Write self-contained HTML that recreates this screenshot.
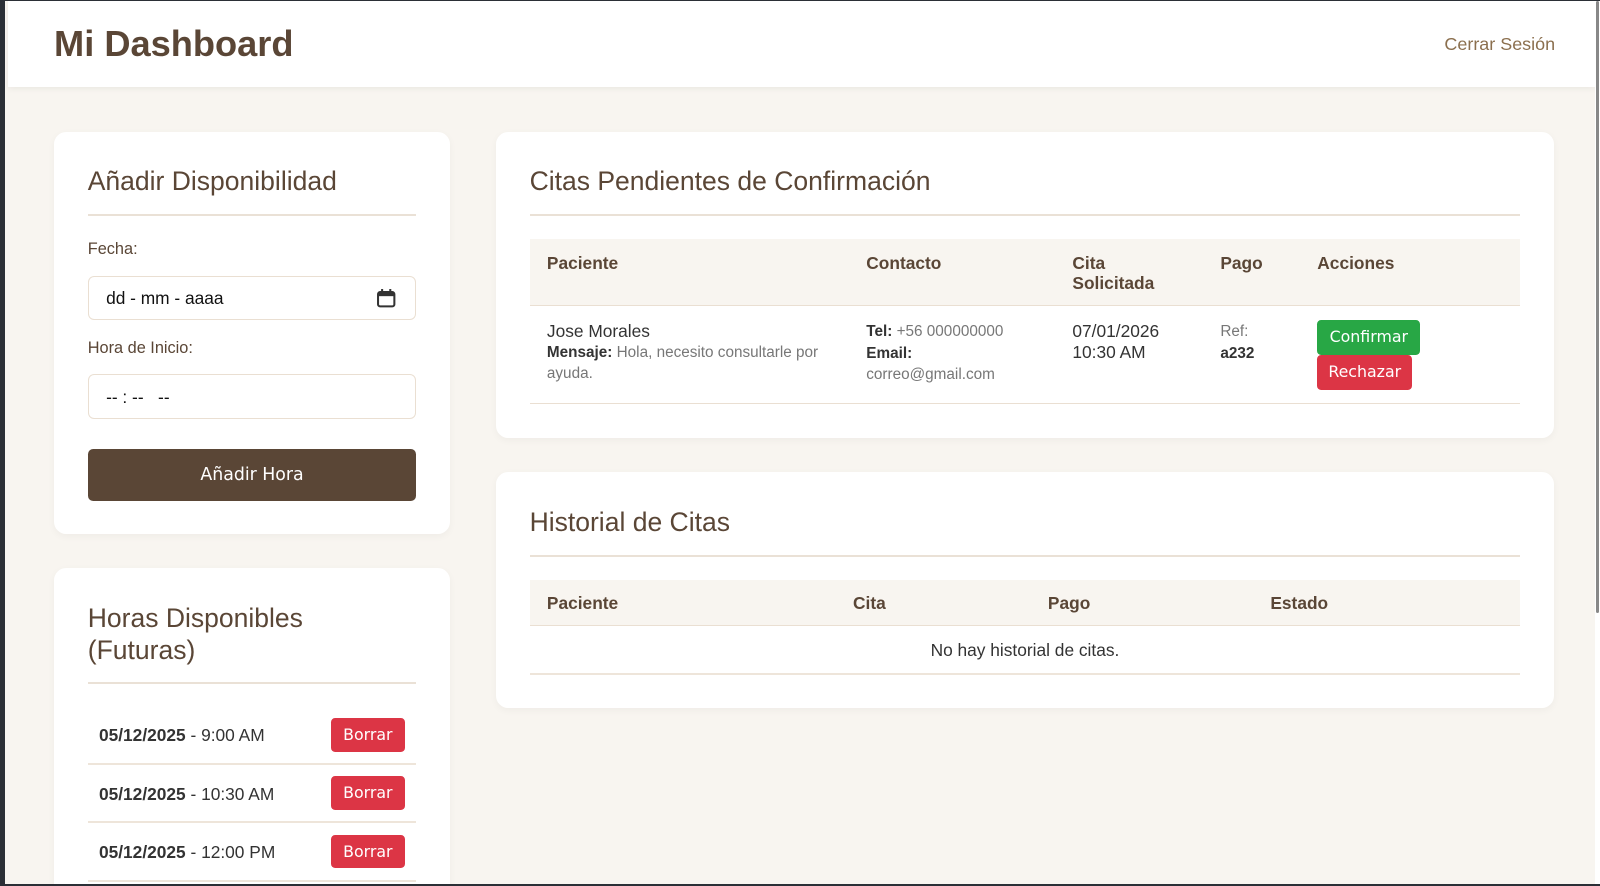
<!DOCTYPE html>
<html><head><meta charset="utf-8">
<style>
html,body{margin:0;padding:0;width:1600px;height:886px;overflow:hidden;background:#2b2f36;}
#w{zoom:1.0204;position:relative;width:1568px;height:868px;font-family:"Liberation Sans",sans-serif;}
#page{position:absolute;left:5px;top:1px;width:1558px;height:865px;background:#f8f5f0;overflow:hidden;}
#sb{position:absolute;left:1563px;top:1px;width:5px;height:865px;background:#fff;}
#sb div{position:absolute;left:1px;top:0;width:3px;height:600px;background:#888;border-radius:2px;}
.hdr{position:absolute;left:3px;top:0;width:1555px;height:84px;background:#fff;box-shadow:0 2px 6px rgba(0,0,0,.06);}
.hdr h1{position:absolute;left:45px;top:22px;margin:0;font-size:35.5px;font-weight:bold;color:#5a4636;}
.hdr a{position:absolute;right:39px;top:32px;font-size:17.6px;color:#8b6f4e;}
.card{position:absolute;background:#fff;border-radius:12px;box-shadow:0 2px 8px rgba(0,0,0,.04);}
.card h2{position:absolute;left:33px;margin:0;font-weight:normal;font-size:26px;color:#5a4636;line-height:31px;}
.hr{position:absolute;left:33px;right:33px;height:2px;background:#eae1d6;}
.lbl{position:absolute;left:33px;font-size:16px;color:#5a4636;}
.inp{position:absolute;left:33px;width:320px;height:42px;border:1px solid #eadfd2;border-radius:6px;font-size:17px;color:#111;}
.inp span{position:absolute;left:17px;top:11px;}
.btnm{position:absolute;left:33px;width:322px;height:51px;background:#5a4636;border-radius:5px;color:#fff;text-align:center;line-height:51px;font-family:"DejaVu Sans","Liberation Sans",sans-serif;font-size:17px;}
.th{position:absolute;left:33px;right:33px;background:#f8f5f0;border-bottom:1px solid #eadfd2;}
.th b{position:absolute;font-size:17px;color:#5a4636;}
.btn{position:absolute;color:#fff;border-radius:4px;font-family:"DejaVu Sans","Liberation Sans",sans-serif;font-size:15.5px;text-align:center;}
.red{background:#dc3545}.grn{background:#28a745}
.row{position:absolute;left:33px;right:33px;height:57px;border-bottom:2px solid #eee5da;}
.row .t{position:absolute;left:11px;top:20px;font-size:17px;color:#333;}
.row .btn{right:11px;top:13px;width:73px;height:33px;line-height:33px}
</style></head><body><div id="w">
<div id="page">
 <div class="hdr"><h1>Mi Dashboard</h1><a>Cerrar Sesión</a></div>

 <div class="card" style="left:48px;top:128px;width:388px;height:394px;">
  <h2 style="top:34px">Añadir Disponibilidad</h2>
  <div class="hr" style="top:81px"></div>
  <div class="lbl" style="top:106px">Fecha:</div>
  <div class="inp" style="top:141px"><span>dd - mm - aaaa</span>
   <svg style="position:absolute;right:18px;top:11px" width="20" height="20" viewBox="0 0 20 20"><rect x="2" y="4" width="16" height="14" rx="2" fill="none" stroke="#333" stroke-width="2"/><rect x="2" y="4" width="16" height="4" fill="#333"/><rect x="5" y="1" width="2" height="4" fill="#333"/><rect x="13" y="1" width="2" height="4" fill="#333"/></svg></div>
  <div class="lbl" style="top:203px">Hora de Inicio:</div>
  <div class="inp" style="top:238px"><span>-- : --&nbsp;&nbsp; --</span></div>
  <div class="btnm" style="top:311px">Añadir Hora</div>
 </div>

 <div class="card" style="left:48px;top:556px;width:388px;height:340px;">
  <h2 style="top:34px">Horas Disponibles<br>(Futuras)</h2>
  <div class="hr" style="top:111px"></div>
  <div class="row" style="top:134px"><div class="t"><b>05/12/2025</b> - 9:00 AM</div><div class="btn red">Borrar</div></div>
  <div class="row" style="top:191px"><div class="t"><b>05/12/2025</b> - 10:30 AM</div><div class="btn red">Borrar</div></div>
  <div class="row" style="top:248px"><div class="t"><b>05/12/2025</b> - 12:00 PM</div><div class="btn red">Borrar</div></div>
 </div>

 <div class="card" style="left:481px;top:128px;width:1037px;height:300px;">
  <h2 style="top:34px">Citas Pendientes de Confirmación</h2>
  <div class="hr" style="top:81px"></div>
  <div class="th" style="top:105px;height:65px;">
   <b style="left:17px;top:14px">Paciente</b><b style="left:330px;top:14px">Contacto</b>
   <b style="left:532px;top:14px;line-height:20px">Cita<br>Solicitada</b><b style="left:677px;top:14px">Pago</b><b style="left:772px;top:14px">Acciones</b>
  </div>
  <div style="position:absolute;left:33px;right:33px;top:171px;height:95px;border-bottom:1px solid #eadfd2;">
   <div style="position:absolute;left:17px;top:15px;font-size:17px;color:#333">Jose Morales</div>
   <div style="position:absolute;left:17px;top:35px;width:290px;font-size:15px;line-height:21px;color:#777"><b style="color:#333">Mensaje:</b> Hola, necesito consultarle por ayuda.</div>
   <div style="position:absolute;left:330px;top:15px;font-size:15px;line-height:21px;color:#777"><b style="color:#333">Tel:</b> +56 000000000<br><b style="color:#333">Email:</b><br>correo@gmail.com</div>
   <div style="position:absolute;left:532px;top:15px;font-size:17px;line-height:20px;color:#333">07/01/2026<br>10:30 AM</div>
   <div style="position:absolute;left:677px;top:15px;font-size:15px;line-height:21px;color:#777">Ref:<br><b style="color:#333">a232</b></div>
   <div class="btn grn" style="left:772px;top:14px;width:101px;height:34px;line-height:34px">Confirmar</div>
   <div class="btn red" style="left:772px;top:48px;width:93px;height:34px;line-height:34px">Rechazar</div>
  </div>
 </div>

 <div class="card" style="left:481px;top:462px;width:1037px;height:231px;">
  <h2 style="top:34px">Historial de Citas</h2>
  <div class="hr" style="top:81px"></div>
  <div class="th" style="top:105px;height:45px;">
   <b style="left:17px;top:13px">Paciente</b><b style="left:317px;top:13px">Cita</b><b style="left:508px;top:13px">Pago</b><b style="left:726px;top:13px">Estado</b>
  </div>
  <div style="position:absolute;left:33px;right:33px;top:151px;height:46px;border-bottom:2px solid #eee5da;text-align:center;font-size:17px;color:#333;line-height:46px">No hay historial de citas.</div>
 </div>
</div>
<div id="sb"><div></div></div>
</div></body></html>
